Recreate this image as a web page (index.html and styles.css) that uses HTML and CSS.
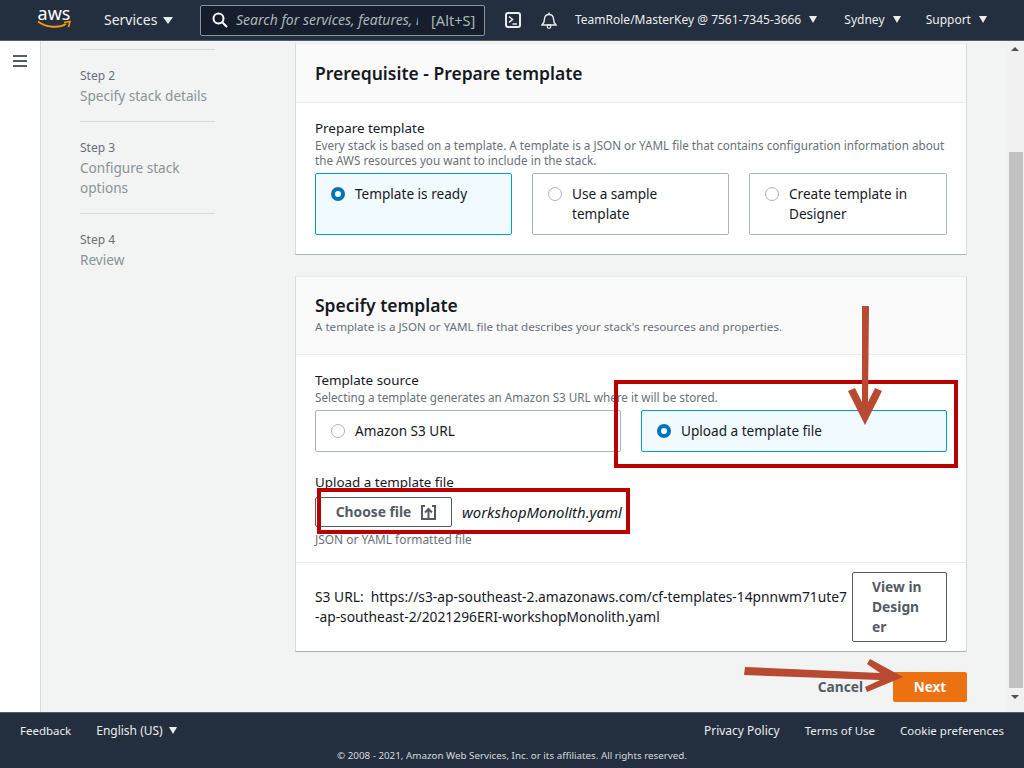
FILE: index.html
```html
<!DOCTYPE html>
<html lang="en">
<head>
    <meta charset="UTF-8">
    <title>Create stack - CloudFormation</title>
    <link rel="stylesheet" href="styles.css">
</head>
<body>
    <header class="topbar">
        <div class="logo">
            <span class="logo-text">aws</span>
            <svg class="logo-smile" width="34" height="9" viewBox="0 0 34 9">
                <path d="M1 1.5C9 7.500 22 8.500 29 4" fill="none" stroke="#f90" stroke-width="2"/>
                <path d="M27 2.500L33 1.500L31.500 7" fill="none" stroke="#f90" stroke-width="1.600"/>
            </svg>
        </div>
        <span class="nav-item services">Services <i class="caret"></i></span>
        <div class="search">
            <svg width="16" height="16" viewBox="0 0 16 16">
                <circle cx="6.500" cy="6.500" r="5" fill="none" stroke="#fff" stroke-width="2"/>
                <path d="M10.500 10.500L15 15" stroke="#fff" stroke-width="2"/>
            </svg>
            <span class="search-text">Search for services, features, r</span>
            <span class="search-key">[Alt+S]</span>
        </div>
        <svg class="shell-icon" width="16" height="16" viewBox="0 0 16 16">
            <rect x="1" y="1" width="14" height="14" rx="2" fill="none" stroke="#eaeded" stroke-width="2"/>
            <path d="M4 4.500L7.500 7.500L4 10.500M7.500 12H12" fill="none" stroke="#eaeded" stroke-width="1.600"/>
        </svg>
        <svg class="bell-icon" width="16" height="17" viewBox="0 0 16 17">
            <path d="M1 13C3 11 3.500 9.500 3.500 7C3.500 4 5.500 2.500 8 2.500S12.500 4 12.500 7C12.500 9.500 13 11 15 13Z" fill="none" stroke="#eaeded" stroke-width="1.400"/>
            <path d="M8 .5V2.500" stroke="#eaeded" stroke-width="1.400"/>
            <circle cx="8" cy="14.500" r="1.800" fill="none" stroke="#eaeded" stroke-width="1.200"/>
        </svg>
        <span class="nav-item account">TeamRole/MasterKey @ 7561-7345-3666 <i class="caret"></i></span>
        <span class="nav-item region">Sydney <i class="caret"></i></span>
        <span class="nav-item support">Support <i class="caret"></i></span>
    </header>

    <div class="shell">
        <aside class="rail">
            <div class="burger"><span></span><span></span><span></span></div>
        </aside>

        <main class="content">
            <nav class="steps">
                <div class="step">
                    <div class="step-num">Step 2</div>
                    <div class="step-name">Specify stack details</div>
                </div>
                <div class="step">
                    <div class="step-num">Step 3</div>
                    <div class="step-name">Configure stack options</div>
                </div>
                <div class="step">
                    <div class="step-num">Step 4</div>
                    <div class="step-name">Review</div>
                </div>
            </nav>

            <div class="form">
                <section class="card card-prereq">
                    <div class="card-head head-short">
                        <h2>Prerequisite - Prepare template</h2>
                    </div>
                    <div class="card-body">
                        <div class="label">Prepare template</div>
                        <div class="desc">Every stack is based on a template. A template is a JSON or YAML file that contains configuration information about the AWS resources you want to include in the stack.</div>
                        <div class="tiles tiles-3">
                            <div class="tile selected"><i class="radio"></i><span>Template is ready</span></div>
                            <div class="tile"><i class="radio"></i><span>Use a sample template</span></div>
                            <div class="tile"><i class="radio"></i><span>Create template in Designer</span></div>
                        </div>
                    </div>
                </section>

                <section class="card card-specify">
                    <div class="card-head head-tall">
                        <h2>Specify template</h2>
                        <div class="desc">A template is a JSON or YAML file that describes your stack's resources and properties.</div>
                    </div>
                    <div class="card-body source">
                        <div class="label">Template source</div>
                        <div class="desc">Selecting a template generates an Amazon S3 URL where it will be stored.</div>
                        <div class="tiles tiles-2">
                            <div class="tile"><i class="radio"></i><span>Amazon S3 URL</span></div>
                            <div class="tile selected"><i class="radio"></i><span>Upload a template file</span></div>
                        </div>
                        <div class="label upload-label">Upload a template file</div>
                        <div class="upload-row">
                            <div class="btn choose">Choose file
                                <svg width="15" height="15" viewBox="0 0 15 15">
                                    <path d="M4 1H1V14H14V1H11" fill="none" stroke="#545b64" stroke-width="2"/>
                                    <path d="M7.500 13V4M4 7.500L7.500 4L11 7.500" fill="none" stroke="#545b64" stroke-width="2"/>
                                </svg>
                            </div>
                            <span class="filename">workshopMonolith.yaml</span>
                        </div>
                        <div class="desc hint">JSON or YAML formatted file</div>
                    </div>
                    <div class="s3-row">
                        <div class="s3-url">S3 URL:&nbsp; https://s3-ap-southeast-2.amazonaws.com/cf-templates-14pnnwm71ute7 -ap-southeast-2/2021296ERI-workshopMonolith.yaml</div>
                        <div class="btn designer">View in Design er</div>
                    </div>
                </section>

                <div class="actions">
                    <span class="cancel">Cancel</span>
                    <span class="next">Next</span>
                </div>
            </div>
        </main>

        <div class="scrollbar">
            <i class="arrow-up"></i>
            <div class="thumb"></div>
            <i class="arrow-down"></i>
        </div>
    </div>

    <footer class="footer">
        <div class="footer-row">
            <span class="feedback">Feedback</span>
            <span class="lang">English (US) <i class="caret"></i></span>
            <span class="spacer"></span>
            <span class="privacy">Privacy Policy</span>
            <span>Terms of Use</span>
            <span>Cookie preferences</span>
        </div>
        <div class="copyright">© 2008 - 2021, Amazon Web Services, Inc. or its affiliates. All rights reserved.</div>
    </footer>

    <!-- annotations drawn on top of the screenshot -->
    <svg class="marks" width="1024" height="768" viewBox="0 0 1024 768">
        <rect x="616" y="382" width="340" height="84" fill="none" stroke="#b80000" stroke-width="4"/>
        <rect x="319" y="490" width="309" height="42" fill="none" stroke="#b80000" stroke-width="4"/>
        <polygon points="862,306 869,306 868,402 875,388 882,391 865,425 848,391 855,388 862,402" fill="#b94a32"/>
        <polygon points="745,667 880,673 867,664 870,659 903,677 867,692 865,687 880,680 744,675" fill="#b94a32"/>
    </svg>
</body>
</html>
```

FILE: styles.css
```css
body {
    margin: 0;
    height: 768px;
    overflow: hidden;
    display: flex;
    flex-direction: column;
    position: relative;
    background: #f2f3f3;
    color: #16191f;
    font-family: "Noto Sans", Arial, sans-serif;
    font-size: 14px;
    line-height: 20px;
}

/* top bar */
.topbar {
    height: 40px;
    flex: none;
    display: flex;
    align-items: center;
    background: #232f3e;
    border-bottom: 1px solid #545b64;
    color: #eaeded;
    font-size: 12px;
}
.logo {
    width: 34px;
    margin-left: 37px;
    display: flex;
    flex-direction: column;
    align-items: center;
    color: #fff;
}
.logo-text {
    font-size: 18px;
    line-height: 14px;
    margin-top: -5px;
}
.nav-item {
    white-space: nowrap;
}
.caret {
    display: inline-block;
    width: 0;
    height: 0;
    margin-left: 5px;
    border-left: 4.500px solid transparent;
    border-right: 4.500px solid transparent;
    border-top: 7px solid #eaeded;
    vertical-align: 1px;
}
.services {
    margin-left: 33px;
    font-size: 14px;
    width: 77px;
}
.services .caret {
    margin-left: 2px;
    border-left-width: 5.500px;
    border-right-width: 5.500px;
}
.search {
    margin-left: 19px;
    width: 283px;
    height: 29px;
    display: flex;
    align-items: center;
    background: #161e2d;
    border: 1px solid #879596;
    border-radius: 2px;
}
.search svg {
    margin-left: 11px;
    flex: none;
}
.search-text {
    margin-left: 8px;
    width: 182px;
    overflow: hidden;
    white-space: nowrap;
    font-style: italic;
    font-size: 14px;
    color: #aab7b8;
}
.search-key {
    margin-left: 13px;
    font-size: 14.600px;
    color: #aab7b8;
}
.shell-icon {
    margin-left: 20px;
}
.bell-icon {
    margin-left: 20px;
}
.account {
    margin-left: 18px;
}
.region {
    margin-left: 27px;
}
.support {
    margin-left: 25px;
}

/* page body */
.shell {
    flex: 1;
    display: flex;
    min-height: 0;
}
.rail {
    width: 40px;
    flex: none;
    background: #fff;
    border-right: 1px solid #d5dbdb;
}
.burger {
    margin: 14px 0 0 13px;
    width: 14px;
    display: flex;
    flex-direction: column;
    gap: 3px;
}
.burger span {
    height: 2px;
    background: #545b64;
}
.content {
    flex: 1;
    display: flex;
    min-width: 0;
    padding-left: 39px;
}

/* wizard steps */
.steps {
    width: 135px;
    flex: none;
    margin-top: 8px;
}
.step {
    border-top: 1px solid #d5dbdb;
    padding: 16px 0 15px;
}
.step-num {
    font-size: 12px;
    line-height: 20px;
    color: #687078;
}
.step-name {
    font-size: 13.600px;
    color: #879596;
}

/* form cards */
.form {
    width: 672px;
    margin-left: 80px;
    padding-top: 2px;
}
.card {
    background: #fff;
    border: 1px solid #d5dbdb;
    border-top-color: #eaeded;
    border-bottom-color: #aab7b8;
    box-sizing: border-box;
}
.card-prereq {
    height: 212px;
}
.card-specify {
    height: 376px;
    margin-top: 21px;
}
.card-head {
    background: #fafafa;
    border-bottom: 1px solid #eaeded;
    box-sizing: border-box;
    padding-left: 19px;
}
.head-short {
    height: 59px;
    padding-top: 18px;
}
.head-tall {
    height: 78px;
    padding-top: 17px;
}
h2 {
    margin: 0;
    font-size: 17.500px;
    line-height: 22px;
    font-weight: 600;
}
.card-body {
    padding: 16px 19px 0 19px;
}
.label {
    font-size: 13.400px;
    line-height: 19px;
}
.desc {
    font-size: 11.700px;
    line-height: 15px;
    color: #687078;
}
.head-tall .desc {
    margin-top: 3px;
    font-size: 11.600px;
}
.tiles {
    display: grid;
    gap: 20px;
    margin-top: 5px;
}
.tiles-3 {
    grid-template-columns: 197px 197px 198px;
}
.tiles-2 {
    grid-template-columns: repeat(2, 1fr);
}
.tile {
    display: flex;
    align-items: flex-start;
    box-sizing: border-box;
    height: 62px;
    padding: 10px 15px;
    border: 1px solid #aab7b8;
    border-radius: 2px;
    font-size: 13.600px;
}
.tiles-2 .tile {
    height: 42px;
}
.tile.selected {
    background: #f1faff;
    border-color: #00a1c9;
}
.radio {
    width: 14px;
    height: 14px;
    flex: none;
    margin: 3px 10px 0 0;
    box-sizing: border-box;
    border: 1px solid #aab7b8;
    border-radius: 50%;
    background: #fff;
}
.selected .radio {
    border: 4px solid #0073bb;
}

/* specify template */
.source {
    height: 208px;
    box-sizing: border-box;
    border-bottom: 1px solid #eaeded;
}
.upload-label {
    margin-top: 21px;
}
.upload-row {
    display: flex;
    align-items: center;
    margin-top: 5px;
}
.btn {
    box-sizing: border-box;
    border: 1px solid #545b64;
    border-radius: 2px;
    font-weight: 700;
    font-size: 13.800px;
    color: #545b64;
    background: #fff;
}
.choose {
    width: 137px;
    height: 30px;
    padding-left: 5px;
    display: flex;
    align-items: center;
    justify-content: center;
    gap: 10px;
}
.filename {
    margin-left: 10px;
    font-style: italic;
    font-size: 14.900px;
}
.hint {
    margin-top: 5px;
    font-size: 11.900px;
}
.s3-row {
    display: flex;
    padding: 9px 19px 0;
}
.s3-url {
    width: 537px;
    margin-top: 15px;
    font-size: 13.800px;
}
.designer {
    width: 95px;
    height: 70px;
    padding: 4px 19px;
    line-height: 20px;
    word-break: break-all;
}
.actions {
    display: flex;
    justify-content: flex-end;
    align-items: center;
    margin-top: 20px;
}
.cancel {
    font-weight: 700;
    font-size: 13.700px;
    color: #545b64;
    margin-right: 30px;
}
.next {
    width: 74px;
    height: 30px;
    line-height: 30px;
    text-align: center;
    background: #ec7211;
    border-radius: 2px;
    font-weight: 700;
    font-size: 13.500px;
    color: #fff;
}

/* scrollbar */
.scrollbar {
    width: 15px;
    flex: none;
    padding-left: 2px;
    display: flex;
    flex-direction: column;
    align-items: flex-start;
    background: #f1f1f1;
    margin-left: auto;
}
.thumb {
    width: 14px;
    height: 536px;
    margin-top: 101px;
    background: #c1c1c1;
}
.arrow-up,
.arrow-down {
    width: 0;
    height: 0;
    margin-left: 2px;
    border-left: 4px solid transparent;
    border-right: 4px solid transparent;
}
.arrow-up {
    margin-top: 6px;
    border-bottom: 4px solid #505050;
}
.arrow-down {
    margin-top: 7px;
    border-top: 4px solid #505050;
}

/* footer */
.footer {
    height: 56px;
    flex: none;
    box-sizing: border-box;
    background: #232f3e;
    border-top: 1px solid #545b64;
    color: #eaeded;
    font-size: 11.500px;
}
.footer-row {
    display: flex;
    gap: 25px;
    padding: 8px 20px 0;
    height: 26px;
}
.lang,
.privacy {
    font-size: 12px;
}
.lang .caret {
    margin-left: 3px;
}
.spacer {
    flex: 1;
}
.copyright {
    margin-top: 2px;
    text-align: center;
    font-size: 9.800px;
    line-height: 14px;
    color: #d5dbdb;
}

.marks {
    position: absolute;
    left: 0;
    top: 0;
}
```
